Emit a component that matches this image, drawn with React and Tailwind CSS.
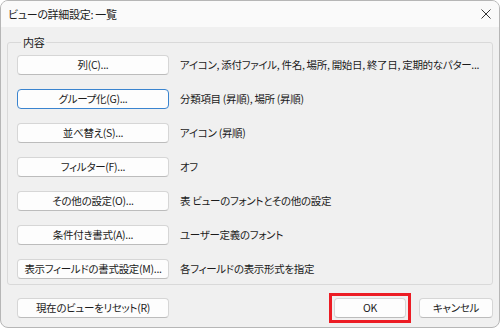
const rows = [
  { label: '列(C)...', desc: 'アイコン, 添付ファイル, 件名, 場所, 開始日, 終了日, 定期的なパター...' },
  { label: 'グループ化(G)...', desc: '分類項目 (昇順), 場所 (昇順)', focused: true },
  { label: '並べ替え(S)...', desc: 'アイコン (昇順)' },
  { label: 'フィルター(F)...', desc: 'オフ' },
  { label: 'その他の設定(O)...', desc: '表 ビューのフォントとその他の設定' },
  { label: '条件付き書式(A)...', desc: 'ユーザー定義のフォント' },
  { label: '表示フィールドの書式設定(M)...', desc: '各フィールドの表示形式を指定' },
];

function Button({ children, focused, className = '' }) {
  return (
    <button
      className={
        'h-[20px] rounded-[4px] bg-[#fdfdfd] text-[#1b1b1b] flex items-center justify-center leading-none ' +
        (focused
          ? 'border border-[#3a84cf] '
          : 'border border-[#d6d6d6] border-b-[#bcbcbc] ') +
        className
      }
    >
      {children}
    </button>
  );
}

export default function App() {
  return (
    <div className="w-[500px] h-[328px] bg-white text-[10.5px] tracking-[-0.3px] text-[#1b1b1b] font-['Noto_Sans_CJK_JP',sans-serif] [font-feature-settings:'palt']">
      <div className="h-full flex flex-col border border-[#b6b6b6] rounded-[8px] overflow-hidden bg-[#f0f0f0]">
        <div className="h-[26px] shrink-0 bg-[#fafafa] flex items-center justify-between pl-[7px] pr-[7px]">
          <span className="leading-none text-[11px]">ビューの詳細設定: 一覧</span>
          <svg width="10" height="10" viewBox="0 0 10 10" className="mr-[1px]">
            <path d="M0.5 0.5 L9.5 9.5 M9.5 0.5 L0.5 9.5" stroke="#333" strokeWidth="1" />
          </svg>
        </div>

        <div className="flex-1 pl-[6px] pr-[6px] pt-[7px]">
          <fieldset className="border border-[#d9d9d9] rounded-[3px] pl-[9px] pr-2 pb-[5px]">
            <legend className="ml-[4px] px-[2px] leading-[16px] text-[11px]">内容</legend>
            <div className="flex flex-col gap-[14px] pt-[5px]">
              {rows.map((r) => (
                <div key={r.label} className="flex items-center gap-[11px]">
                  <Button focused={r.focused} className="w-[152px] shrink-0">
                    {r.label}
                  </Button>
                  <span className="leading-none whitespace-nowrap">{r.desc}</span>
                </div>
              ))}
            </div>
          </fieldset>

          <div className="flex items-center justify-between mt-[8px] pl-[10px]">
            <Button className="w-[152px]">現在のビューをリセット(R)</Button>
            <div className="flex items-center gap-[8px]">
              <div className="border-[3px] border-[#ec1c24] p-[2px]">
                <Button className="w-[72px]">OK</Button>
              </div>
              <Button className="w-[74px]">キャンセル</Button>
            </div>
          </div>
        </div>
      </div>
    </div>
  );
}
